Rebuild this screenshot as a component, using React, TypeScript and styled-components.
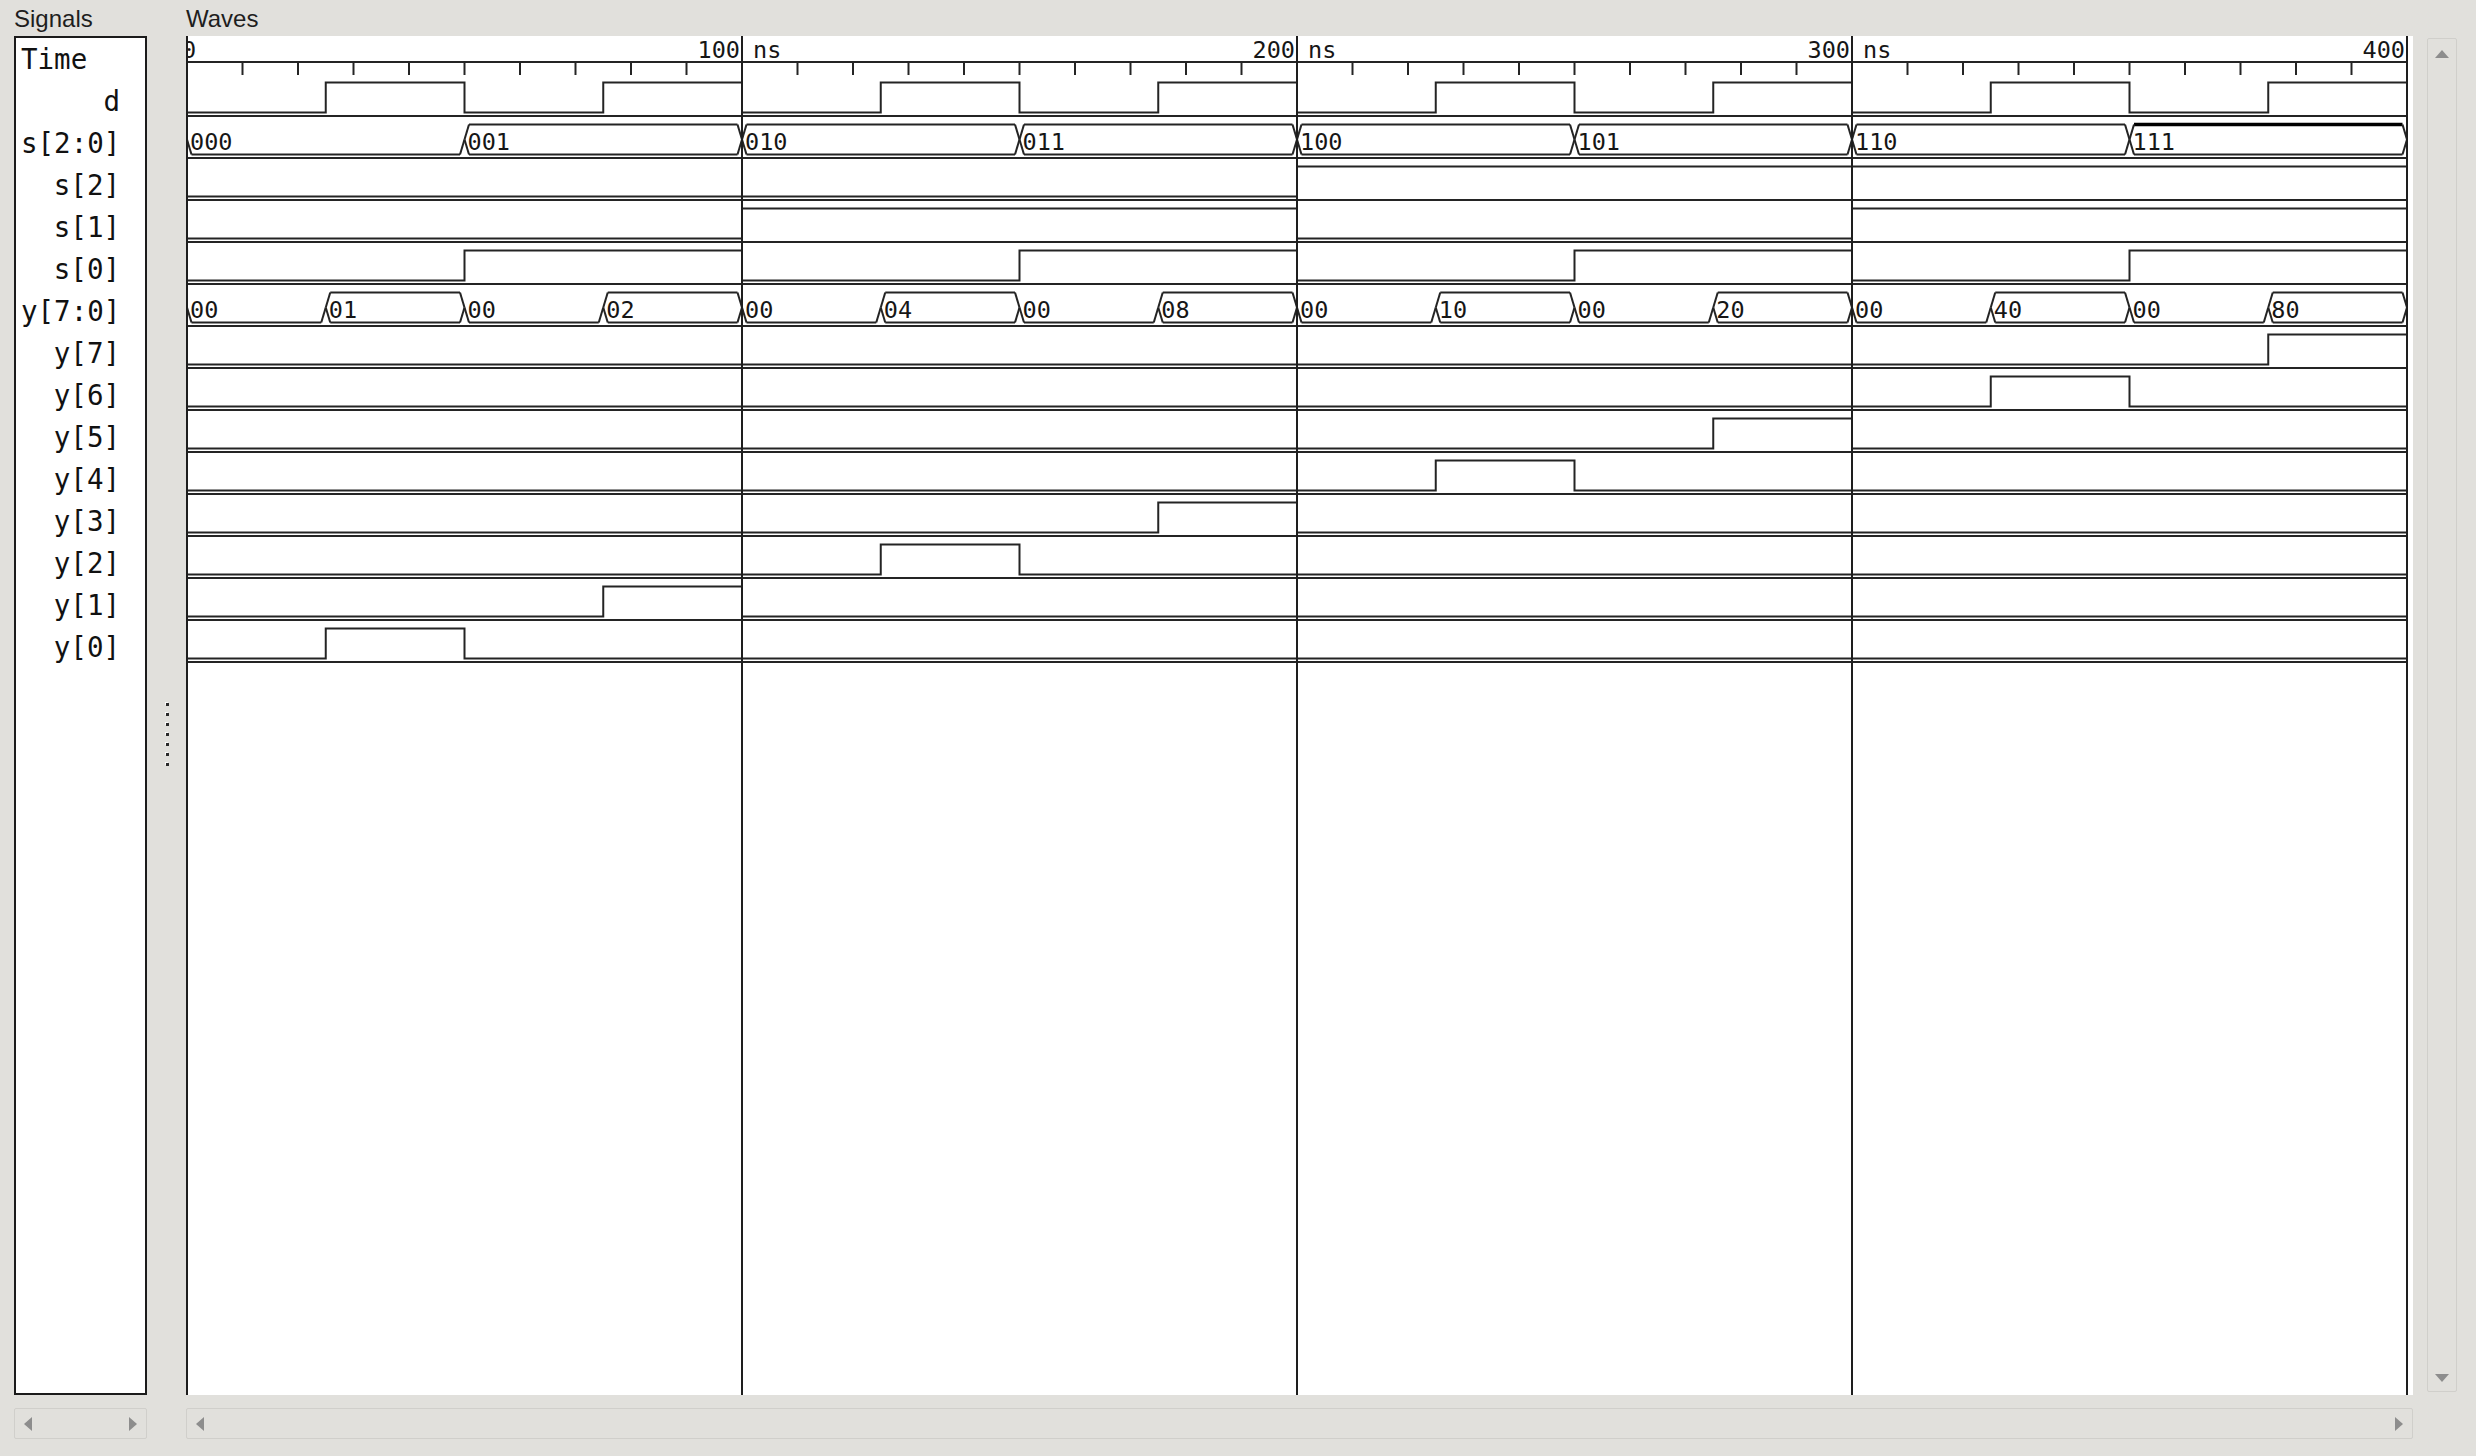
import React from 'react';
import styled, { createGlobalStyle } from 'styled-components';

const GlobalStyle = createGlobalStyle`
  html, body {
    margin: 0;
    padding: 0;
    background: #e1e0dc;
    overflow: hidden;
  }
`;

const Frame = styled.div`
  width: 2476px;
  height: 1456px;
  box-sizing: border-box;
  padding-left: 14px;
  display: grid;
  grid-template-columns: 133px 39px 2227px 14px 30px;
  grid-template-rows: 36px 1359px 13px 31px;
  background: #e1e0dc;
`;

const PaneTitle = styled.div<{ $col: number }>`
  grid-column: ${p => p.$col};
  grid-row: 1;
  font-family: "Liberation Sans", Arial, sans-serif;
  font-size: 24px;
  line-height: 24px;
  padding-top: 7px;
  color: #1e1e1e;
`;

const SignalBox = styled.div`
  grid-column: 1;
  grid-row: 2;
  box-sizing: border-box;
  border: 2px solid #1b1b1b;
  background: #fff;
  padding: 0 25px 0 5px;
  display: flex;
  flex-direction: column;
  overflow: hidden;
`;

const NameRow = styled.div<{ $left?: boolean }>`
  height: 42px;
  line-height: 42px;
  font-family: "DejaVu Sans Mono", monospace;
  font-size: 27.5px;
  color: #111;
  white-space: nowrap;
  text-align: ${p => (p.$left ? 'left' : 'right')};
`;

const Splitter = styled.div`
  grid-column: 2;
  grid-row: 2;
  display: flex;
  flex-direction: column;
  align-items: center;
  gap: 7px;
  padding-top: 667px;
  padding-left: 2px;
`;

const Dot = styled.span`
  width: 3px;
  height: 3px;
  background: #2a2a2a;
  box-shadow: -1px -1px 0 #fafafa;
`;

const WavePane = styled.div`
  grid-column: 3;
  grid-row: 2;
  background: #fff;
  overflow: hidden;
`;

const WaveCanvas = styled.svg`
  display: block;
  font-family: "DejaVu Sans Mono", monospace;
`;

const VScroll = styled.div`
  grid-column: 5;
  grid-row: 2;
  margin: 2px 0 3px;
  box-sizing: border-box;
  border: 1px solid #d0cfcb;
  border-radius: 2px;
  padding: 11px 0 9px;
  display: flex;
  flex-direction: column;
  justify-content: space-between;
  align-items: center;
`;

const HScroll = styled.div<{ $col: number }>`
  grid-column: ${p => p.$col};
  grid-row: 4;
  box-sizing: border-box;
  border: 1px solid #d0cfcb;
  border-radius: 2px;
  padding: 0 9px;
  display: flex;
  justify-content: space-between;
  align-items: center;
`;

type Dir = 'up' | 'down' | 'left' | 'right';

const arrowBorders: Record<Dir, string> = {
  up: 'border-width: 0 7.5px 8px; border-color: transparent transparent #8d8d8d;',
  down: 'border-width: 8px 7.5px 0; border-color: #8d8d8d transparent transparent;',
  left: 'border-width: 7px 8px 7px 0; border-color: transparent #8d8d8d transparent transparent;',
  right: 'border-width: 7px 0 7px 8px; border-color: transparent transparent transparent #8d8d8d;',
};

const Arrow = styled.span<{ $dir: Dir }>`
  width: 0;
  height: 0;
  border-style: solid;
  ${p => arrowBorders[p.$dir]}
`;

// time scale: 5.55 px per ns, 0 ns sits on the left edge line
const NS = 5.55;
const END = 400;
const X = (t: number) => 1 + t * NS;
const ROW = 42;
const rowTop = (k: number) => 42 + k * ROW;
const STROKE = '#242424';
const LABEL_SIZE = 23.5;

type BitSig = { kind: 'bit'; name: string; edges: [number, number][] };
type Seg = { t: number; v: string; zero: boolean; bold?: boolean };
type BusSig = { kind: 'bus'; name: string; segs: Seg[] };
type Sig = BitSig | BusSig;

const range = (n: number) => Array.from({ length: n }, (_, i) => i);

const SIGNALS: Sig[] = [
  { kind: 'bit', name: 'd', edges: range(16).map(i => [i * 25, i % 2] as [number, number]) },
  {
    kind: 'bus',
    name: 's[2:0]',
    segs: range(8).map(i => {
      const v = i.toString(2).padStart(3, '0');
      return { t: i * 50, v, zero: i === 0, bold: i === 7 };
    }),
  },
  { kind: 'bit', name: 's[2]', edges: [[0, 0], [200, 1]] },
  { kind: 'bit', name: 's[1]', edges: [[0, 0], [100, 1], [200, 0], [300, 1]] },
  { kind: 'bit', name: 's[0]', edges: range(8).map(i => [i * 50, i % 2] as [number, number]) },
  {
    kind: 'bus',
    name: 'y[7:0]',
    segs: range(16).map(i => {
      const v = i % 2 ? (1 << ((i - 1) / 2)).toString(16).padStart(2, '0') : '00';
      return { t: i * 25, v, zero: i % 2 === 0 };
    }),
  },
  ...range(8).map(j => {
    const b = 7 - j;
    const edges: [number, number][] = [[0, 0], [25 + 50 * b, 1]];
    if (50 + 50 * b < END) edges.push([50 + 50 * b, 0]);
    return { kind: 'bit', name: `y[${b}]`, edges } as BitSig;
  }),
];

const BitWave = ({ k, edges }: { k: number; edges: [number, number][] }) => {
  const y0 = rowTop(k);
  const hi = y0 + 4.5;
  const lo = y0 + 34.5;
  let d = `M ${X(0)} ${edges[0][1] ? hi : lo}`;
  for (let i = 1; i < edges.length; i++) {
    const [t, v] = edges[i];
    d += ` H ${X(t)} V ${v ? hi : lo}`;
  }
  d += ` H ${X(END)}`;
  return <path d={d} fill="none" stroke={STROKE} strokeWidth={2} />;
};

const BusWave = ({ k, segs }: { k: number; segs: Seg[] }) => {
  const y0 = rowTop(k);
  const top = y0 + 4.5;
  const bot = y0 + 34.5;
  const mid = y0 + 19.5;
  const D = 4.5;
  const times = segs.map(s => s.t).concat(END);
  const lines: React.ReactNode[] = [];

  segs.forEach((s, i) => {
    const xa = X(times[i]) + D;
    const xb = X(times[i + 1]) - D;
    lines.push(<line key={`b${i}`} x1={xa} x2={xb} y1={bot} y2={bot} />);
    if (!s.zero) {
      lines.push(
        <line
          key={`t${i}`}
          x1={xa}
          x2={xb}
          y1={top}
          y2={top}
          strokeWidth={s.bold ? 3.5 : 2}
          stroke={s.bold ? '#000' : STROKE}
        />
      );
    }
  });

  times.forEach((t, i) => {
    const x = X(t);
    const left = segs[i - 1];
    const right = segs[i];
    if (left) {
      lines.push(<line key={`bl${i}`} x1={x - D} y1={bot} x2={x} y2={mid} />);
      if (!left.zero) lines.push(<line key={`tl${i}`} x1={x - D} y1={top} x2={x} y2={mid} />);
    }
    if (right) {
      lines.push(<line key={`br${i}`} x1={x} y1={mid} x2={x + D} y2={bot} />);
      if (!right.zero) lines.push(<line key={`tr${i}`} x1={x} y1={mid} x2={x + D} y2={top} />);
    }
  });

  return (
    <g>
      <g stroke={STROKE} strokeWidth={2}>{lines}</g>
      {segs.map((s, i) => (
        <text key={i} x={X(s.t) + 3} y={y0 + 29.5} fontSize={LABEL_SIZE} fill="#161616">
          {s.v}
        </text>
      ))}
    </g>
  );
};

const Waves = () => {
  const W = 2227;
  const H = 1359;
  const majors = [0, 100, 200, 300, 400];
  const ticks = range(40).map(i => i * 10).filter(t => t % 100 !== 0);

  return (
    <WaveCanvas width={W} height={H} viewBox={`0 0 ${W} ${H}`}>
      {/* timeline */}
      <line x1={0} x2={X(END)} y1={26} y2={26} stroke={STROKE} strokeWidth={2} />
      {ticks.map(t => (
        <line key={t} x1={X(t)} x2={X(t)} y1={26} y2={39} stroke={STROKE} strokeWidth={2} />
      ))}
      <g fontSize={LABEL_SIZE} fill="#161616">
        <text x={-4} y={22}>0</text>
        {majors.slice(1).map(t => (
          <g key={t}>
            <text x={X(t) - 2} y={22} textAnchor="end">{t}</text>
            {t < END && <text x={X(t) + 11} y={22}>ns</text>}
          </g>
        ))}
      </g>

      {/* row separators */}
      {SIGNALS.map((_, k) => (
        <line
          key={k}
          x1={0}
          x2={X(END)}
          y1={rowTop(k) + 38}
          y2={rowTop(k) + 38}
          stroke={STROKE}
          strokeWidth={2}
        />
      ))}

      {SIGNALS.map((s, k) =>
        s.kind === 'bit' ? (
          <BitWave key={s.name} k={k} edges={s.edges} />
        ) : (
          <BusWave key={s.name} k={k} segs={s.segs} />
        )
      )}

      {/* major grid lines */}
      {majors.map(t => (
        <line key={t} x1={X(t)} x2={X(t)} y1={0} y2={H} stroke="#1e1e1e" strokeWidth={2} />
      ))}
    </WaveCanvas>
  );
};

const App = () => (
  <>
    <GlobalStyle />
    <Frame>
      <PaneTitle $col={1}>Signals</PaneTitle>
      <PaneTitle $col={3}>Waves</PaneTitle>

      <SignalBox>
        <NameRow $left>Time</NameRow>
        {SIGNALS.map(s => (
          <NameRow key={s.name}>{s.name}</NameRow>
        ))}
      </SignalBox>

      <Splitter>
        {range(7).map(i => (
          <Dot key={i} />
        ))}
      </Splitter>

      <WavePane>
        <Waves />
      </WavePane>

      <VScroll>
        <Arrow $dir="up" />
        <Arrow $dir="down" />
      </VScroll>

      <HScroll $col={1}>
        <Arrow $dir="left" />
        <Arrow $dir="right" />
      </HScroll>
      <HScroll $col={3}>
        <Arrow $dir="left" />
        <Arrow $dir="right" />
      </HScroll>
    </Frame>
  </>
);

export default App;
